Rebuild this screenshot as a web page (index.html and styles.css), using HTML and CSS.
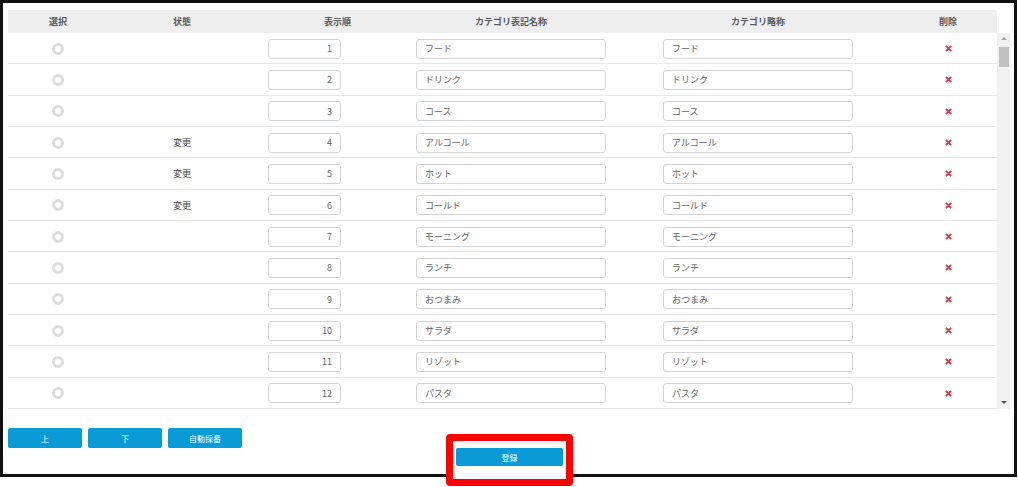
FILE: index.html
```html
<!DOCTYPE html>
<html lang="ja">
<head>
  <meta charset="UTF-8">
  <title>カテゴリ設定</title>
  <link rel="stylesheet" href="styles.css">
</head>
<body>
  <div class="frame">
    <div class="table">
      <!-- Header -->
      <div class="thead">
        <div class="th">選択</div>
        <div class="th">状態</div>
        <div class="th th-order">表示順</div>
        <div class="th">カテゴリ表記名称</div>
        <div class="th">カテゴリ略称</div>
        <div class="th th-del">削除</div>
      </div>

      <!-- Body with scrollbar -->
      <div class="tbody">
        <div class="list">
          <div class="row"><div class="cell"><span class="radio"></span></div><div class="cell state"></div><div class="cell order"><input class="num" value="1"></div><div class="cell"><input class="text name" value="フード"></div><div class="cell"><input class="text name" value="フード"></div><div class="cell del"><svg viewBox="0 0 8 8"><path d="M1 1L7 7M7 1L1 7"/></svg></div></div>
          <div class="row"><div class="cell"><span class="radio"></span></div><div class="cell state"></div><div class="cell order"><input class="num" value="2"></div><div class="cell"><input class="text name" value="ドリンク"></div><div class="cell"><input class="text name" value="ドリンク"></div><div class="cell del"><svg viewBox="0 0 8 8"><path d="M1 1L7 7M7 1L1 7"/></svg></div></div>
          <div class="row"><div class="cell"><span class="radio"></span></div><div class="cell state"></div><div class="cell order"><input class="num" value="3"></div><div class="cell"><input class="text name" value="コース"></div><div class="cell"><input class="text name" value="コース"></div><div class="cell del"><svg viewBox="0 0 8 8"><path d="M1 1L7 7M7 1L1 7"/></svg></div></div>
          <div class="row"><div class="cell"><span class="radio"></span></div><div class="cell state">変更</div><div class="cell order"><input class="num" value="4"></div><div class="cell"><input class="text name" value="アルコール"></div><div class="cell"><input class="text name" value="アルコール"></div><div class="cell del"><svg viewBox="0 0 8 8"><path d="M1 1L7 7M7 1L1 7"/></svg></div></div>
          <div class="row"><div class="cell"><span class="radio"></span></div><div class="cell state">変更</div><div class="cell order"><input class="num" value="5"></div><div class="cell"><input class="text name" value="ホット"></div><div class="cell"><input class="text name" value="ホット"></div><div class="cell del"><svg viewBox="0 0 8 8"><path d="M1 1L7 7M7 1L1 7"/></svg></div></div>
          <div class="row"><div class="cell"><span class="radio"></span></div><div class="cell state">変更</div><div class="cell order"><input class="num" value="6"></div><div class="cell"><input class="text name" value="コールド"></div><div class="cell"><input class="text name" value="コールド"></div><div class="cell del"><svg viewBox="0 0 8 8"><path d="M1 1L7 7M7 1L1 7"/></svg></div></div>
          <div class="row"><div class="cell"><span class="radio"></span></div><div class="cell state"></div><div class="cell order"><input class="num" value="7"></div><div class="cell"><input class="text name" value="モーニング"></div><div class="cell"><input class="text name" value="モーニング"></div><div class="cell del"><svg viewBox="0 0 8 8"><path d="M1 1L7 7M7 1L1 7"/></svg></div></div>
          <div class="row"><div class="cell"><span class="radio"></span></div><div class="cell state"></div><div class="cell order"><input class="num" value="8"></div><div class="cell"><input class="text name" value="ランチ"></div><div class="cell"><input class="text name" value="ランチ"></div><div class="cell del"><svg viewBox="0 0 8 8"><path d="M1 1L7 7M7 1L1 7"/></svg></div></div>
          <div class="row"><div class="cell"><span class="radio"></span></div><div class="cell state"></div><div class="cell order"><input class="num" value="9"></div><div class="cell"><input class="text name" value="おつまみ"></div><div class="cell"><input class="text name" value="おつまみ"></div><div class="cell del"><svg viewBox="0 0 8 8"><path d="M1 1L7 7M7 1L1 7"/></svg></div></div>
          <div class="row"><div class="cell"><span class="radio"></span></div><div class="cell state"></div><div class="cell order"><input class="num" value="10"></div><div class="cell"><input class="text name" value="サラダ"></div><div class="cell"><input class="text name" value="サラダ"></div><div class="cell del"><svg viewBox="0 0 8 8"><path d="M1 1L7 7M7 1L1 7"/></svg></div></div>
          <div class="row"><div class="cell"><span class="radio"></span></div><div class="cell state"></div><div class="cell order"><input class="num" value="11"></div><div class="cell"><input class="text name" value="リゾット"></div><div class="cell"><input class="text name" value="リゾット"></div><div class="cell del"><svg viewBox="0 0 8 8"><path d="M1 1L7 7M7 1L1 7"/></svg></div></div>
          <div class="row"><div class="cell"><span class="radio"></span></div><div class="cell state"></div><div class="cell order"><input class="num" value="12"></div><div class="cell"><input class="text name" value="パスタ"></div><div class="cell"><input class="text name" value="パスタ"></div><div class="cell del"><svg viewBox="0 0 8 8"><path d="M1 1L7 7M7 1L1 7"/></svg></div></div>
        </div>
        <!-- fake scrollbar -->
        <div class="scrollbar">
          <span class="arrow up"></span>
          <div class="track"><span class="thumb"></span></div>
          <span class="arrow down"></span>
        </div>
      </div>
    </div>

    <!-- Move buttons -->
    <div class="actions">
      <button class="btn">上</button>
      <button class="btn">下</button>
      <button class="btn">自動採番</button>
    </div>

    <!-- Register -->
    <div class="submit-row">
      <div class="submit-wrap">
        <span class="highlight"></span>
        <button class="btn btn-submit">登録</button>
      </div>
    </div>
  </div>
</body>
</html>
```

FILE: styles.css
```css
html, body {
  margin: 0;
  padding: 0;
  background: #fff;
  overflow: hidden;
}

body {
  height: 487px;
  font-family: "Noto Sans CJK JP", "Noto Sans", sans-serif;
  color: #444;
}

.frame {
  width: 1017px;
  height: 477px;
  box-sizing: border-box;
  border: 3px solid #111;
  padding: 7px 0 0 5px;
}

.table {
  width: 1003px;
}

/* header */
.thead {
  width: 989px;
  height: 23px;
  background: #eeeeee;
  display: grid;
  grid-template-columns: 100px 148px 104px 302px 192px 143px;
  align-items: center;
}

.th {
  font-size: 9px;
  font-weight: bold;
  color: #5a5a5a;
  text-align: center;
}

.th-order {
  text-align: right;
  padding-right: 9px;
}

.th-del {
  padding-left: 45px;
}

/* body */
.tbody {
  display: flex;
}

.list {
  width: 989px;
  height: 376px;
  overflow: hidden;
}

.row {
  display: grid;
  grid-template-columns: 100px 148px 104px 302px 192px 143px;
  align-items: center;
  height: 31.33px;
  box-sizing: border-box;
  border-bottom: 1px solid #e8e8e8;
  padding-top: 1px;
}

.cell {
  display: flex;
  justify-content: center;
  align-items: center;
}

.radio {
  width: 12px;
  height: 12px;
  box-sizing: border-box;
  border: 3px solid #dcdcdc;
  border-radius: 50%;
  background: #fff;
}

.state {
  font-size: 9px;
  color: #444;
}

.order {
  justify-content: flex-start;
  padding-left: 12px;
}

input {
  font-family: inherit;
  font-size: 9px;
  color: #666;
  height: 20px;
  box-sizing: border-box;
  border: 1px solid #d4d4d4;
  border-radius: 3px;
  background: #fff;
  outline: none;
  margin: 0;
}

.num {
  width: 73px;
  text-align: right;
  padding: 0 8px;
}

.name {
  width: 190px;
  padding: 0 8px;
}

.del {
  padding-left: 45px;
}

.del svg {
  width: 7px;
  height: 7px;
}

.del path {
  stroke: #e23a45;
  stroke-width: 2.2;
  fill: none;
}

/* fake scrollbar */
.scrollbar {
  width: 13px;
  height: 376px;
  background: #f1f1f1;
  display: flex;
  flex-direction: column;
  align-items: center;
}

.arrow {
  width: 0;
  height: 0;
  border-left: 3px solid transparent;
  border-right: 3px solid transparent;
}

.arrow.up {
  margin-top: 4px;
  border-bottom: 3px solid #a3a3a3;
}

.arrow.down {
  margin-bottom: 5px;
  border-top: 3px solid #505050;
}

.track {
  flex: 1;
  width: 100%;
  display: flex;
  justify-content: center;
  padding-top: 7px;
}

.thumb {
  width: 10px;
  height: 20px;
  background: #c1c1c1;
}

/* buttons */
.actions {
  display: flex;
  gap: 6px;
  margin-top: 19px;
}

.btn {
  width: 74px;
  height: 20px;
  padding: 0;
  border: none;
  border-radius: 2px;
  background: #0a9ad6;
  color: #fff;
  font-family: inherit;
  font-size: 8px;
  cursor: pointer;
}

.submit-row {
  width: 1003px;
  display: flex;
  justify-content: center;
}

.submit-wrap {
  position: relative;
}

.btn-submit {
  position: relative;
  z-index: 1;
  width: 107px;
  height: 18px;
  display: block;
}

/* red annotation box over the register button */
.highlight {
  position: absolute;
  left: -10px;
  top: -14px;
  width: 127px;
  height: 52px;
  box-sizing: border-box;
  border: 7px solid #ff0000;
  border-radius: 4px;
  background: #fff;
}
```
